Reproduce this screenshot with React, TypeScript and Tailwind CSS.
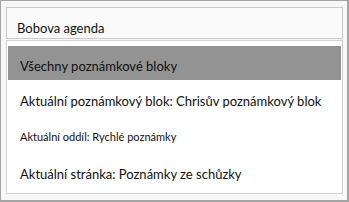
import React from 'react';

const items = [
  { label: 'Všechny poznámkové bloky', active: true, box: 'h-[34px] pt-[12px] text-[13px] leading-[16px]' },
  { label: 'Aktuální poznámkový blok: Chrisův poznámkový blok', active: false, box: 'h-[36px] pt-[13px] text-[13px] leading-[16px]' },
  { label: 'Aktuální oddíl: Rychlé poznámky', active: false, box: 'h-[36px] pt-[14px] text-[11px] leading-[14px]' },
  { label: 'Aktuální stránka: Poznámky ze schůzky', active: false, box: 'h-[36px] pt-[14px] text-[13px] leading-[16px]' },
];

function App() {
  return (
    <div
      className="w-[349px] h-[202px] border-t border-l border-r-2 border-b-2 border-[#a4a4a4] bg-[#f7f7f7] pt-[6px] pl-[5px] pr-[4px] flex flex-col gap-[1px] text-[#111]"
      style={{ fontFamily: 'Lato, "Noto Sans", sans-serif' }}
    >
      {/* search box */}
      <div className="h-[32px] border border-[#cacaca] bg-[#fafafa] pl-[10px] pt-[12px] text-[13px] leading-[16px]">
        Bobova agenda
      </div>

      {/* scope list */}
      <div className="h-[154px] border border-[#d2d2d2] bg-white pt-[5px] px-px">
        {items.map((it) => (
          <div
            key={it.label}
            className={`${it.box} pl-[12px] whitespace-nowrap ${it.active ? 'bg-[#939393]' : ''}`}
          >
            {it.label}
          </div>
        ))}
      </div>
    </div>
  );
}

export default App;
